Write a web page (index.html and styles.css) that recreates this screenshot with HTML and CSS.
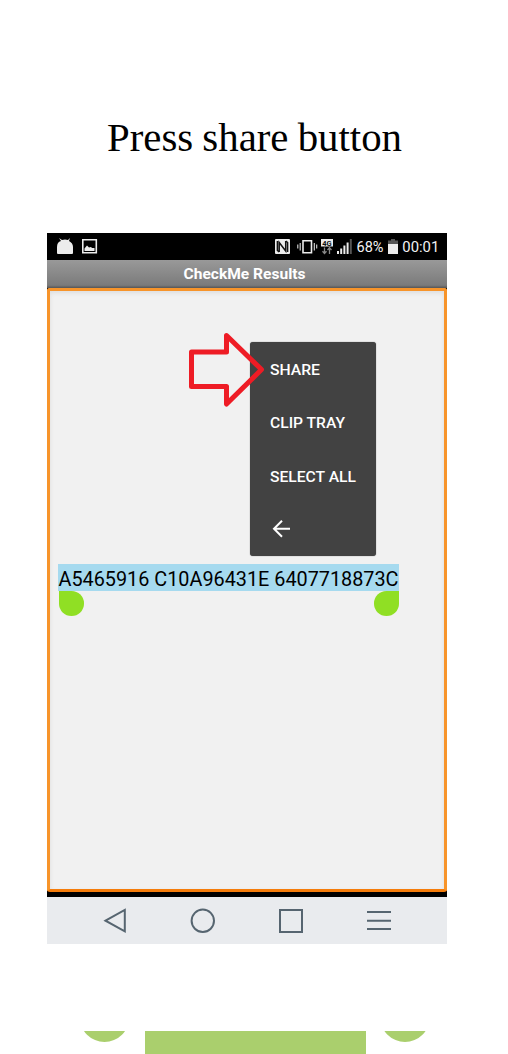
FILE: index.html
```
<!DOCTYPE html>
<html lang="en">
<head>
<meta charset="utf-8">
<title>Press share button</title>
<link rel="stylesheet" href="styles.css">
</head>
<body>
<main class="page">
  <svg class="title" width="508" height="70" role="heading" aria-level="1"><text x="107" y="51.4" textLength="295" lengthAdjust="spacingAndGlyphs">Press share button</text></svg>
  <section class="phone">
    <header class="status">
      <svg class="status-left" width="60" height="27">
        <path class="fill" d="M10 20v-6q0-5 4-6l-2-3 3 2q3-1 6 0l2-2-1 3q4 2 4 6v6q0 1-1 1H11q-1 0-1-1z"/>
        <path class="line" d="M35.8 6.8h13.5v13H35.8z"/>
        <path class="fill" d="M37.5 18v-2.5l2.5-3 2 2 2-.5 1 1h2.5v3z"/>
      </svg>
      <svg class="status-right" width="180" height="27">
        <rect class="fill" x="8" y="6" width="15" height="15" rx="1"/>
        <path class="nfc" d="M12.2 19V9.5l6.5 8.5V8M12.2 19l-1.8-1.5V8M18.8 8l1.8 1.5V19"/>
        <path class="line" d="M36 7.7h8.5v12H36z"/>
        <path class="thin" d="M33.2 10v7.5M30.8 11.5v4M47.3 10v7.5M49.7 11.5v4"/>
        <rect class="fill" x="54" y="6" width="12" height="7.5"/>
        <text class="network" x="55.2" y="12.5" textLength="9.5" lengthAdjust="spacingAndGlyphs">4G</text>
        <path class="dim" d="M57.5 14.5v6M55.5 18.2l2 2.3 2-2.3M62.5 21v-6M60.5 17l2-2.3 2 2.3"/>
        <path class="fill" d="M70 18h2v3h-2zM73.2 15.5h2V21h-2zM76.4 12.5h2V21h-2zM79.6 9.5h2V21h-2z"/>
        <path class="muted" d="M82.8 6h2v15h-2z"/>
        <text class="status-text" x="89.5" y="19.3" textLength="27" lengthAdjust="spacingAndGlyphs">68%</text>
        <path class="muted" d="M124 6h4v1.5h3V12h-10V7.5h3z"/>
        <path class="fill" d="M121 11h10v10h-10z"/>
        <text class="status-text" x="135.3" y="19.3" textLength="37" lengthAdjust="spacingAndGlyphs">00:01</text>
      </svg>
    </header>
    <div class="bar"><svg width="400" height="28"><text x="136.5" y="19.2" textLength="122" lengthAdjust="spacingAndGlyphs">CheckMe Results</text></svg></div>
    <div class="content">
      <svg class="selection" width="341" height="27"><text x="0.5" y="22" textLength="340" lengthAdjust="spacingAndGlyphs">A5465916 C10A96431E 6407718873C</text></svg>
      <div class="handles"><i class="handle start"></i><i class="handle end"></i></div>
      <div class="menu">
        <svg class="item" width="126" height="53"><text x="20" y="33" textLength="50" lengthAdjust="spacingAndGlyphs">SHARE</text></svg>
        <svg class="item" width="126" height="53"><text x="20" y="33.4" textLength="75" lengthAdjust="spacingAndGlyphs">CLIP TRAY</text></svg>
        <svg class="item" width="126" height="54"><text x="20" y="34" textLength="86" lengthAdjust="spacingAndGlyphs">SELECT ALL</text></svg>
        <svg class="item" width="126" height="53"><path d="M40 26.8H24.5M32 18.8l-8 8 8 8"/></svg>
      </div>
      <svg class="pointer" width="82" height="80"><path d="M6.5 22H41.5V5.5L76.5 39.5 41.5 74V56.5H6.5Z"/></svg>
    </div>
    <nav class="nav">
      <svg width="400" height="47">
        <path d="M58.5 23.7 77.8 13v21.4z"/>
        <circle cx="155.8" cy="23.8" r="11.2"/>
        <path d="M233 13h22v22h-22zM320 14.9h24M320 23.7h24M320 32h24"/>
      </svg>
    </nav>
  </section>
  <svg class="footer" width="508" height="23"><circle cx="104.5" cy="-13.7" r="24.7"/><path d="M145 0h221v23H145z"/><circle cx="405" cy="-13.7" r="24.7"/></svg>
</main>
</body>
</html>
```
FILE: styles.css
```
body { margin: 0; background: #fff; }
svg { display: block; }
.page { width: 508px; height: 1054px; overflow: hidden; display: flex; flex-direction: column; }
.title { margin-top: 100px; flex: none; }
.title text { font: 39px "Liberation Serif", serif; word-spacing: -1px; fill: #000; }
.phone { width: 400px; height: 711px; margin: 63px 0 0 47px; flex: none; background: #000; font-family: Roboto, sans-serif; }
.status { height: 27px; display: flex; justify-content: space-between; }
.fill { fill: #ececec; }
.line { fill: none; stroke: #ececec; stroke-width: 1.6; }
.thin { fill: none; stroke: #ddd; stroke-width: 1.1; }
.nfc { fill: none; stroke: #111; stroke-width: 1.5; }
.dim { fill: none; stroke: #888; stroke-width: 1.3; }
.muted { fill: #555; }
.network { font: bold 8px Roboto, sans-serif; fill: #111; }
.status-text { font: 15.5px Roboto, sans-serif; fill: #f2f2f2; }
.bar { height: 28px; background: linear-gradient(#999, #7b7b7b 90%, #555); }
.bar text { font: bold 15.5px Roboto, sans-serif; fill: #fff; }
.content { position: relative; box-sizing: border-box; height: 604px; border: 3px solid #f7942a; border-bottom-color: #f57c0a; border-radius: 3px; background: #f1f1f1; box-shadow: inset 0 2px 4px #ddd; padding: 273px 0 0 8.5px; }
.selection { background: #a6daef; overflow: visible; margin-left: -0.5px; }
.selection text { font: 20.5px Roboto, sans-serif; fill: #000; }
.handles { width: 340px; display: flex; justify-content: space-between; }
.handle { width: 25px; height: 24.5px; background: #90df24; }
.start { border-radius: 0 50% 50% 50%; }
.end { border-radius: 50% 0 50% 50%; }
.menu { position: absolute; left: 200px; top: 51px; width: 126px; height: 214px; background: #424242; border-radius: 3px; box-shadow: 0 0 1px #555; }
.item text { font: 500 15.5px Roboto, sans-serif; fill: #fff; }
.item path { fill: none; stroke: #fff; stroke-width: 2; }
.pointer { position: absolute; left: 135px; top: 39px; }
.pointer path { fill: none; stroke: #ee1c25; stroke-width: 5; stroke-linejoin: round; }
.nav { margin-top: 5px; height: 47px; background: #e9ebee; }
.nav path, .nav circle { fill: none; stroke: #566570; stroke-width: 2; }
.footer { margin-top: 87px; fill: #aacf6d; flex: none; }
```
